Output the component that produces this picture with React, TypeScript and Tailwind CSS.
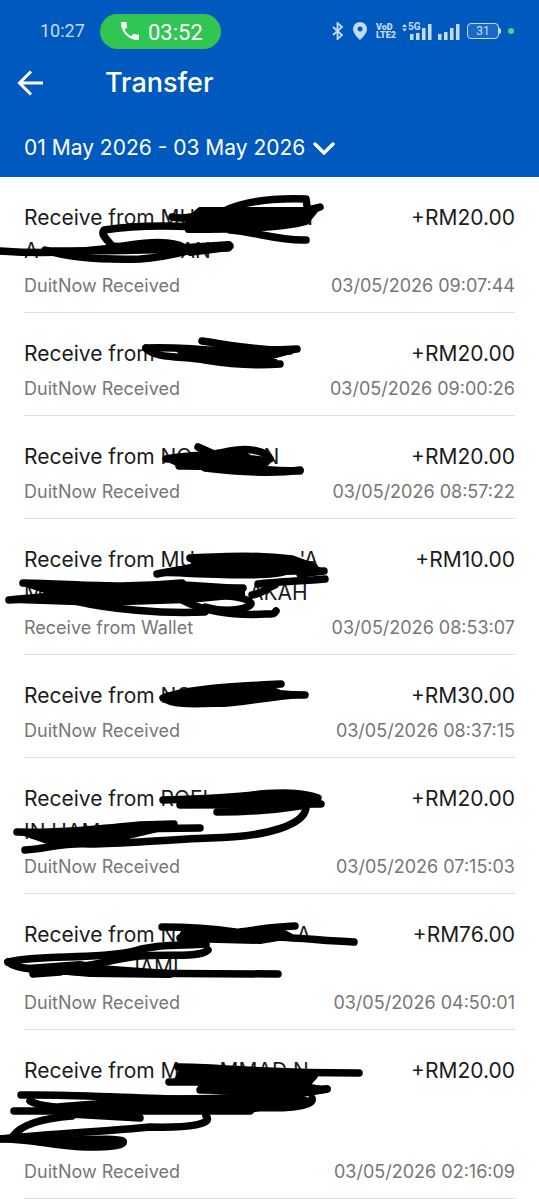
import React from 'react';

interface Transaction {
  // each line is a list of words (string) and blanked-out stretches (width in px)
  lines: (string | number)[][];
  method: string;
  amount: string;
  time: string;
  inkBox: string;
  strokes: string[];
  blobs: string[];
}

const transactions: Transaction[] = [
  {
    lines: [['MU', 102, 'N'], ['A', 142, 'AN']],
    method: 'DuitNow Received',
    amount: '+RM20.00',
    time: '03/05/2026 09:07:44',
    inkBox: '0 177 380 136',
    strokes: [
      'M222 212C245 200 275 198 306 199L307 206',
      'M172 217C182 219 192 218 202 214',
      'M300 214L320 207',
      'M230 230C255 232 280 241 306 240',
      'M196 227C160 225 130 226 104 230C100 235 108 240 112 246',
      'M0 251C40 254 80 254 130 245C160 240 180 243 186 249',
      'M45 250C70 258 100 260 140 259C160 258 180 253 192 250',
      'M45 251C100 251 160 251 228 246',
      'M186 251L230 246',
      'M184 248L228 248',
      'M110 246L180 250',
    ],
    blobs: [
      'M200 210L304 210L318 207L306 222C285 228 240 230 188 230L188 220Z',
      'M184 247L229 244L229 248L190 253Z',
    ],
  },
  {
    lines: [[]],
    method: 'DuitNow Received',
    amount: '+RM20.00',
    time: '03/05/2026 09:00:26',
    inkBox: '0 313 380 103',
    strokes: [
      'M146 348C175 347 200 349 230 352L297 349',
      'M146 348C154 359 185 356 205 360C230 364 255 366 280 364',
      'M202 341C230 345 255 350 290 351',
    ],
    blobs: ['M180 351L240 348L294 350L272 356L275 362L220 359L190 355Z'],
  },
  {
    lines: [['NO', 71, 'N']],
    method: 'DuitNow Received',
    amount: '+RM20.00',
    time: '03/05/2026 08:57:22',
    inkBox: '0 416 380 103',
    strokes: [
      'M198 447L216 455',
      'M166 459C190 454 205 457 230 451C250 447 268 452 270 459',
      'M179 466C220 465 250 470 300 471',
      'M205 468C240 472 275 474 300 470',
    ],
    blobs: ['M168 459L210 458L242 453L250 458L269 460L262 468L184 466Z'],
  },
  {
    lines: [['MU', 104, "'A"], ['M', 206, 'AKAH']],
    method: 'Receive from Wallet',
    amount: '+RM10.00',
    time: '03/05/2026 08:53:07',
    inkBox: '0 519 380 136',
    strokes: [
      'M157 574C170 571 185 569 200 567',
      'M190 558C230 556 260 555 292 559L314 567',
      'M324 571L300 574',
      'M325 579C300 581 275 582 258 584',
      'M275 585C266 588 262 594 252 595',
      'M23 583C80 584 120 589 182 583',
      'M9 600C40 598 60 594 100 592',
      'M75 601C110 609 160 614 205 612',
      'M182 600C200 610 230 616 266 614C276 614 274 613 276 611',
      'M205 607C230 614 252 608 251 603C247 598 230 594 200 596',
      'M180 589L243 588',
    ],
    blobs: [
      'M192 560L240 557L292 560L322 571L286 572C270 578 220 575 162 573L200 565Z',
      'M26 584L70 588L180 584L242 588L242 595L190 600L100 603L12 600L60 595Z',
    ],
  },
  {
    lines: [['NO']],
    method: 'DuitNow Received',
    amount: '+RM30.00',
    time: '03/05/2026 08:37:15',
    inkBox: '0 655 380 103',
    strokes: ['M163 698C190 688 240 686 281 684', 'M240 694L305 695'],
    blobs: ['M164 699C180 690 220 690 262 685L280 693L304 695C260 698 235 705 215 704C190 705 170 705 164 699Z'],
  },
  {
    lines: [['ROFI'], ['IN HAM']],
    method: 'DuitNow Received',
    amount: '+RM20.00',
    time: '03/05/2026 07:15:03',
    inkBox: '0 758 380 136',
    strokes: [
      'M163 800C200 799 240 797 260 794C290 792 305 793 318 798',
      'M180 805L321 804',
      'M217 812C250 812 275 810 300 806',
      'M306 808C304 824 270 837 210 838C160 840 120 844 90 844C65 842 45 849 25 850',
      'M17 832C60 833 100 829 140 825L174 824',
      'M200 828L120 829',
    ],
    blobs: ['M180 802L240 799L280 797L318 801L300 806L184 805Z', 'M24 833L130 830L170 826L128 836L90 844L50 842Z'],
  },
  {
    lines: [['N', 120, 'A'], [104, 'JAMI']],
    method: 'DuitNow Received',
    amount: '+RM76.00',
    time: '03/05/2026 04:50:01',
    inkBox: '0 894 380 136',
    strokes: [
      'M162 927C190 927 215 929 235 932',
      'M180 938C220 938 255 927 295 926',
      'M275 937C305 938 325 941 354 942',
      'M8 962C40 954 90 960 130 952C160 943 180 946 206 944',
      'M208 950C200 958 165 954 140 956C110 959 95 967 60 968',
      'M8 962C20 972 60 970 100 973L278 974',
      'M33 974L60 972',
    ],
    blobs: ['M185 930L238 932L280 931L290 936L260 941L180 939Z', 'M25 968L80 964L100 968L170 973L170 975L90 974Z'],
  },
  {
    lines: [['M', 40, 'MMAD N'], [], []],
    method: 'DuitNow Received',
    amount: '+RM20.00',
    time: '03/05/2026 02:16:09',
    inkBox: '0 1030 380 169',
    strokes: [
      'M178 1067C220 1067 250 1073 359 1073',
      'M169 1082L240 1082',
      'M200 1090L300 1090L327 1089',
      'M21 1095C70 1094 120 1098 180 1099C240 1099 280 1095 327 1089',
      'M14 1111L250 1111',
      'M30 1101C40 1107 60 1108 90 1108',
      'M140 1118L70 1114',
      'M312 1098C315 1108 280 1109 245 1107',
      'M72 1116C45 1118 22 1124 13 1136',
      'M206 1116C214 1124 190 1128 150 1127C110 1131 50 1134 0 1139',
      'M0 1139C30 1138 50 1146 85 1147C115 1147 125 1145 123 1141C115 1137 70 1141 40 1140',
      'M40 1142L115 1144',
    ],
    blobs: [
      'M182 1070L240 1074L315 1076L306 1086L326 1090L290 1096L202 1090L200 1082L176 1082Z',
      'M60 1106L150 1099L290 1096L306 1100L250 1110L70 1112Z',
    ],
  },
];

const StatusBar: React.FC = () => (
  <div className="flex items-center justify-between h-[62px] pl-10 pr-[25px] text-[#c5dbfb]">
    <div className="flex items-center gap-4">
      <span className="w-11 font-[Roboto,sans-serif] text-lg">10:27</span>
      <div className="flex items-center h-[35px] px-[18px] gap-1.5 rounded-full bg-[#31c653] text-white">
        <svg className="w-6 h-6" viewBox="0 0 24 24" fill="currentColor">
          <path d="M20 15.5c-1.2 0-2.4-.2-3.6-.6-.3-.1-.7 0-1 .2l-2.2 2.2c-2.8-1.4-5.1-3.8-6.600-6.600l2.200-2.200c.3-.3.4-.7.2-1C8.700 6.400 8.500 5.200 8.500 4c0-.6-.4-1-1-1H4c-.6 0-1 .4-1 1 0 9.400 7.600 17 17 17 .6 0 1-.4 1-1v-3.500c0-.6-.4-1-1-1z" />
        </svg>
        <span className="pt-0.5 font-[Roboto,sans-serif] text-[22px]">03:52</span>
      </div>
    </div>

    <div className="flex items-center">
      <svg className="w-3 h-[18px] mr-2" viewBox="0 0 12 18" fill="none" stroke="currentColor" strokeWidth="1.8">
        <path d="M1 5l9 8-4.500 4V1L10 5l-9 8" />
      </svg>
      <svg className="w-4 h-[18px] mr-2" viewBox="0 0 16 18" fill="currentColor" fillRule="evenodd">
        <path d="M8 0a7 7 0 0 0-7 7c0 5 7 11 7 11s7-6 7-11a7 7 0 0 0-7-7zm0 4.500a2.500 2.500 0 1 1 0 5 2.500 2.500 0 0 1 0-5z" />
      </svg>
      <span className="mr-[6px] w-5 font-[Roboto,sans-serif] text-[9px] leading-2 font-black">
        VoD
        <br />
        LTE2
      </span>
      <span className="relative mr-[6px] block">
        <svg className="w-[30px] h-[17px]" viewBox="0 0 30 17" fill="currentColor">
          <path d="M0 4l2.500-3L5 4zM0 5.500h5l-2.500 3zM8 11h3.500v6H8zM14 10h3.500v7H14zM20 5h3.500v12H20zM26 1h3.500v16H26z" />
        </svg>
        <span className="absolute left-[6px] top-0 font-[Roboto,sans-serif] text-[10px] leading-2 font-bold">5G</span>
      </span>
      <svg className="w-[22px] h-[17px] mr-[7px]" viewBox="0 0 22 17" fill="currentColor">
        <path d="M0 11h3.500v6H0zM6 9h3.500v8H6zM12 5h3.500v12H12zM18 1h3.500v16H18z" />
      </svg>
      <span className="flex items-center justify-center w-8 h-4 border border-current rounded-[4px] bg-white/10 font-[Roboto,sans-serif] text-xs">
        31
      </span>
      <span className="w-[2px] h-[6px] bg-current rounded-r-sm" />
      <span className="ml-[7px] w-[6px] h-[6px] rounded-full bg-[#3fdc85]" />
    </div>
  </div>
);

const Header: React.FC = () => (
  <header className="h-[177px] bg-[#0059be] text-white">
    <StatusBar />
    <div className="flex items-center h-[42px] px-4">
      <button aria-label="Back">
        <svg className="w-7 h-7" viewBox="0 0 28 28" fill="none" stroke="currentColor" strokeWidth="3">
          <path d="M27 14H4M15 2.500L3.500 14 15 25.500" />
        </svg>
      </button>
      <h1 className="ml-[61px] text-[27px] font-medium">Transfer</h1>
    </div>
    <button className="flex items-center gap-2 h-9 mt-[26px] ml-6 text-[21px]">
      01 May 2026 - 03 May 2026
      <svg className="w-[22px] h-[14px]" viewBox="0 0 22 14" fill="none" stroke="currentColor" strokeWidth="3.4" strokeLinecap="round">
        <path d="M2 3l9 9 9-9" />
      </svg>
    </button>
  </header>
);

const TransactionRow: React.FC<{ item: Transaction }> = ({ item }) => (
  <li className="relative px-6">
    <div className="pt-6 pb-[13px] border-b border-[#dedede]">
      <div className="flex justify-between text-[21px] leading-[33px] text-[#1b1b1b]">
        <div>
          {item.lines.map((line, i) => (
            <p key={i} className="flex min-h-[33px] whitespace-pre">
              {i === 0 && 'Receive from '}
              {line.map((part, j) =>
                typeof part === 'number' ? <span key={j} style={{ width: part }} /> : <span key={j}>{part}</span>
              )}
            </p>
          ))}
        </div>
        <span>{item.amount}</span>
      </div>
      <div className="flex justify-between mt-1.5 text-lg leading-[26px] text-[#767676]">
        <span>{item.method}</span>
        <time>{item.time}</time>
      </div>
    </div>

    {/* Marker over the sender name */}
    <svg className="absolute left-0 top-0 w-[380px] h-full" viewBox={item.inkBox} aria-hidden="true">
      <g fill="none" stroke="#000" strokeWidth="7.5" strokeLinecap="round" strokeLinejoin="round">
        {item.strokes.map((d) => (
          <path key={d} d={d} />
        ))}
      </g>
      <g fill="#000" stroke="#000" strokeWidth="6" strokeLinejoin="round">
        {item.blobs.map((d) => (
          <path key={d} d={d} />
        ))}
      </g>
    </svg>
  </li>
);

const App: React.FC = () => {
  return (
    <div className="w-full bg-white font-[Inter,sans-serif]">
      <Header />
      <ul>
        {transactions.map((item) => (
          <TransactionRow key={item.time} item={item} />
        ))}
      </ul>
    </div>
  );
};

export default App;
